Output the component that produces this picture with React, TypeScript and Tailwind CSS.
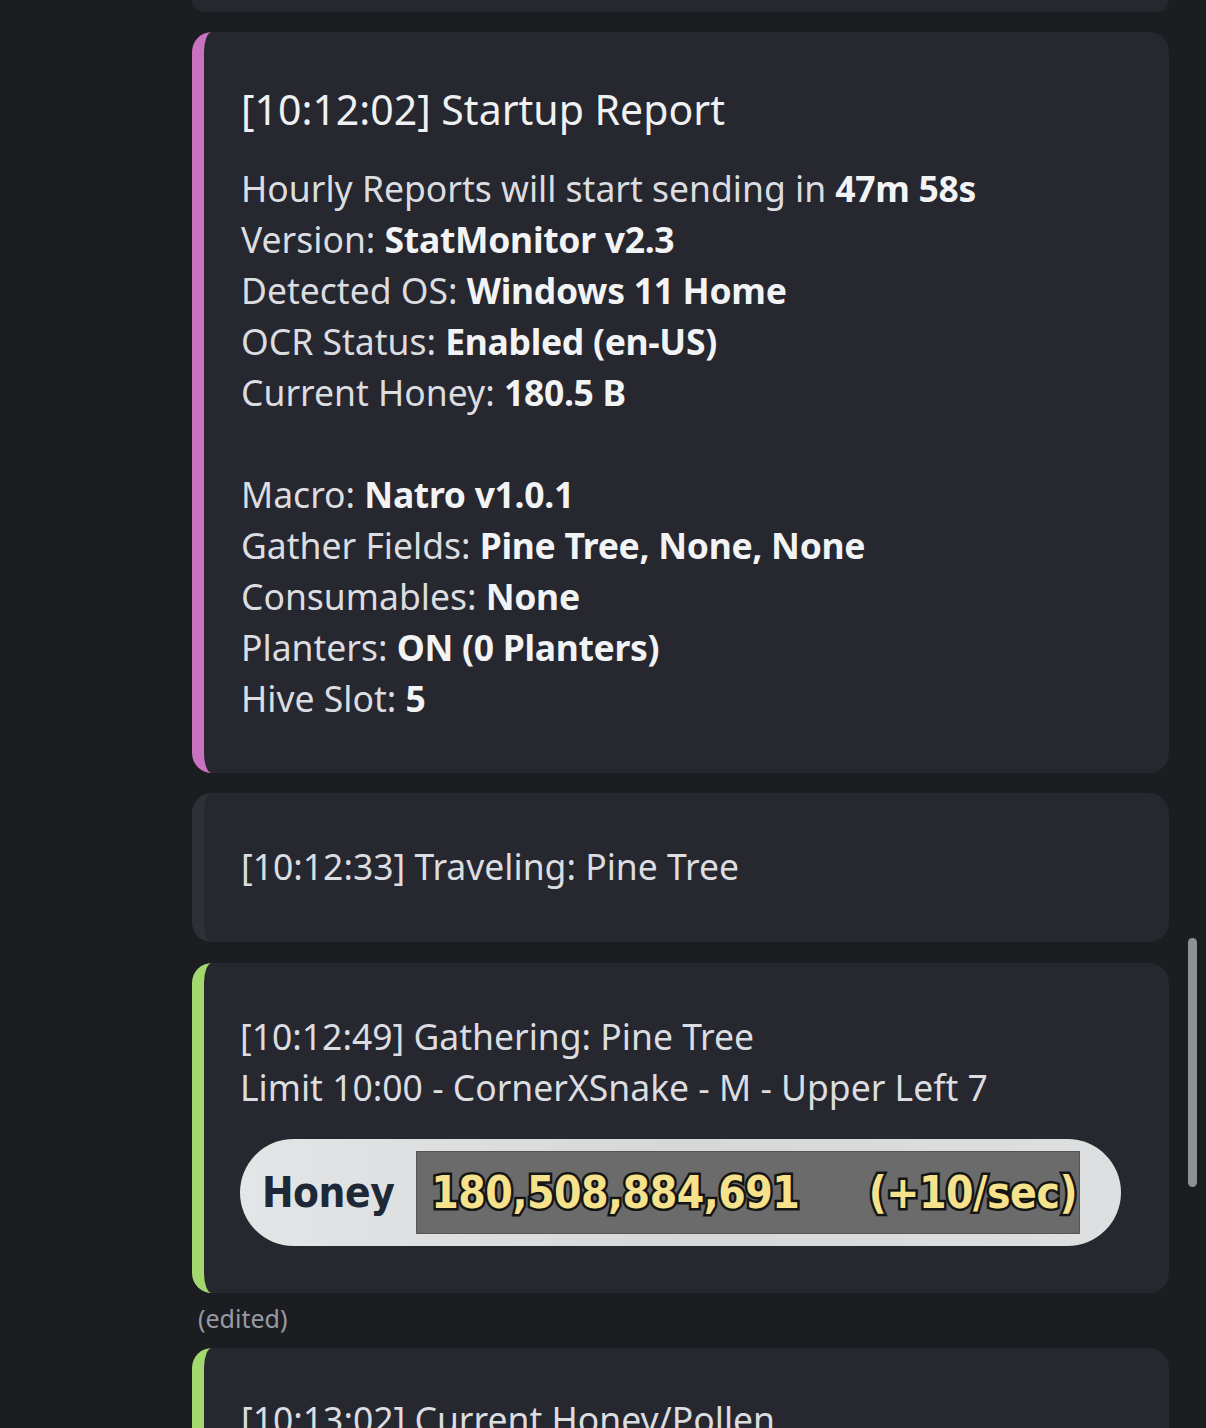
import React from 'react';

const font = { fontFamily: '"Noto Sans", "Open Sans", sans-serif' };

const Line = ({ label, value }: { label: string; value?: string }) => (
  <div className="h-[51px] leading-[51px] whitespace-nowrap">
    {label}
    {value && <span className="font-bold text-[#f2f3f5] tracking-[-0.3px]">{value}</span>}
  </div>
);

const HoneyBar = () => (
  <div className="mt-[26px] h-[107px] w-[881px] rounded-full bg-gradient-to-r from-[#e4e5e6] via-[#d6d7d8] to-[#dedfe0] flex items-center pl-[22px] pr-[41px]">
    <span
      className="text-[42px] font-bold text-[#1e2938] tracking-[-0.5px] mr-[22px]"
      style={{ fontFamily: '"DejaVu Sans Condensed", "Liberation Sans", sans-serif' }}
    >
      Honey
    </span>
    <div
      className="flex-1 h-[83px] bg-[#6b6b6b] border border-[#555] flex items-center justify-between pl-[14px] pr-[2px] text-[44px] font-bold text-[#f6e18c] [-webkit-text-stroke:5px_#151515] [paint-order:stroke_fill] tracking-[-0.5px]"
      style={{ fontFamily: '"DejaVu Sans Condensed", "Liberation Sans", sans-serif' }}
    >
      <span>180,508,884,691</span>
      <span>(+10/sec)</span>
    </div>
  </div>
);

export default function App() {
  return (
    <div className="h-[1428px] w-[1206px] bg-[#1c1d21] text-[#dbdde1] overflow-hidden relative" style={font}>
      <div className="ml-[192px] w-[977px] flex flex-col">
        {/* previous embed tail */}
        <div className="h-[12px] rounded-b-[20px] bg-[#26272f]" />

        {/* Startup report */}
        <div className="mt-[20px] rounded-[20px] bg-[#26272f] border-l-[12px] border-[#c872c0] pl-[37px] pt-[48px] pb-[49px] text-[35.5px]">
          <div className="h-[58px] leading-[58px] text-[41px] text-[#eff0f2] mb-[25px]">[10:12:02] Startup Report</div>
          <Line label="Hourly Reports will start sending in " value="47m 58s" />
          <Line label="Version: " value="StatMonitor v2.3" />
          <Line label="Detected OS: " value="Windows 11 Home" />
          <Line label="OCR Status: " value="Enabled (en-US)" />
          <Line label="Current Honey: " value="180.5 B" />
          <div className="h-[51px]" />
          <Line label="Macro: " value="Natro v1.0.1" />
          <Line label="Gather Fields: " value="Pine Tree, None, None" />
          <Line label="Consumables: " value="None" />
          <Line label="Planters: " value="ON (0 Planters)" />
          <Line label="Hive Slot: " value="5" />
        </div>

        {/* Traveling */}
        <div className="mt-[20px] rounded-[20px] bg-[#26272f] border-l-[12px] border-[#2f3037] pl-[37px] pt-[48px] pb-[50px] text-[35.5px]">
          <Line label="[10:12:33] Traveling: Pine Tree" />
        </div>

        {/* Gathering */}
        <div className="mt-[21px] rounded-[20px] bg-[#26272f] border-l-[12px] border-[#a3d86e] pl-[36px] pt-[48px] pb-[47px] text-[35.5px]">
          <Line label="[10:12:49] Gathering: Pine Tree" />
          <Line label="Limit 10:00 - CornerXSnake - M - Upper Left 7" />
          <HoneyBar />
        </div>

        <div className="ml-[6px] mt-[10px] h-[30px] leading-[30px] text-[25px] text-[#949ba4]">(edited)</div>

        {/* Current honey */}
        <div className="mt-[15px] rounded-[20px] bg-[#26272f] border-l-[12px] border-[#a3d86e] pl-[37px] pt-[46px] pb-[48px] text-[35.5px]">
          <Line label="[10:13:02] Current Honey/Pollen" />
        </div>
      </div>

      {/* scrollbar */}
      <div className="absolute left-[1188px] top-[938px] w-[9px] h-[249px] rounded-full bg-[#8e9096]" />
    </div>
  );
}
